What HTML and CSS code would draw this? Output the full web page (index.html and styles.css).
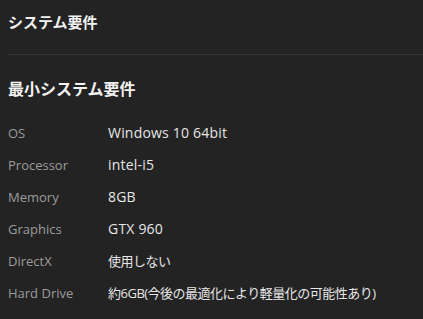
FILE: index.html
```html
<!DOCTYPE html>
<html>
<head>
    <title>システム要件</title>
    <meta charset="UTF-8">
    <meta name="viewport" content="width=device-width, initial-scale=1.0">
    <link rel="stylesheet" href="styles.css">
</head>
<body>
    <div class="sysreq">
        <h2 class="title">システム要件</h2>

        <h3 class="subtitle">最小システム要件</h3>

        <div class="spec-list">
            <div class="label">OS</div>
            <div class="value">Windows 10 64bit</div>

            <div class="label">Processor</div>
            <div class="value">intel-i5</div>

            <div class="label">Memory</div>
            <div class="value">8GB</div>

            <div class="label">Graphics</div>
            <div class="value">GTX 960</div>

            <div class="label">DirectX</div>
            <div class="value value-jp">使用しない</div>

            <div class="label">Hard Drive</div>
            <div class="value value-jp">約6GB(今後の最適化により軽量化の可能性あり)</div>
        </div>
    </div>
</body>
</html>
```

FILE: styles.css
```css
body {
    margin: 0;
    background-color: #232323;
    color: #e2e2e2;
    font-family: 'Open Sans', 'Noto Sans CJK JP', sans-serif;
}
.sysreq {
    padding: 0 0 0 8px;
}
.title {
    margin: 12px 0 0;
    padding-bottom: 22px;
    font-size: 15px;
    line-height: 20px;
    font-weight: bold;
    color: #f2f2f2;
    border-bottom: 1px solid #363636;
}
.subtitle {
    margin: 23px 0 0;
    font-size: 16px;
    line-height: 22px;
    font-weight: bold;
    color: #f2f2f2;
}
.spec-list {
    display: grid;
    grid-template-columns: 100px 1fr;
    row-gap: 12px;
    margin-top: 23px;
    line-height: 20px;
}
.label {
    font-size: 13px;
    color: #9c9c9c;
}
.value {
    font-size: 14px;
    letter-spacing: 0.2px;
    color: #e6e6e6;
}
.value-jp {
    font-size: 13px;
    letter-spacing: -0.5px;
}
```
